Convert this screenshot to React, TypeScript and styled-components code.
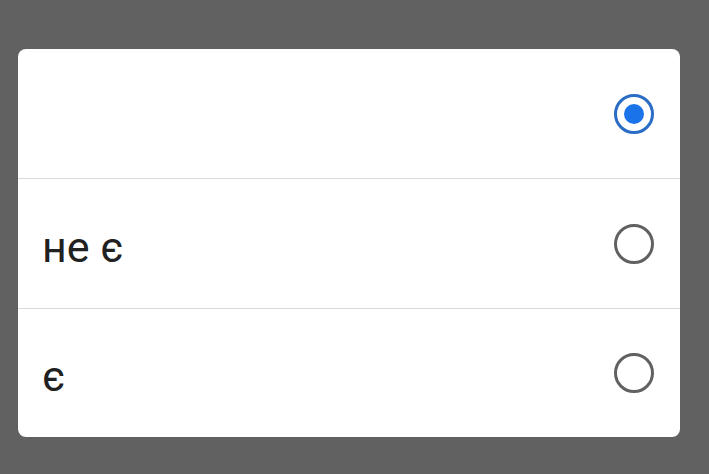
import React, { useState } from "react";
import styled, { createGlobalStyle } from "styled-components";

const GlobalStyle = createGlobalStyle`
    html, body {
        margin: 0;
        padding: 0;
        background: #616161;
        font-family: Roboto, "Noto Sans", sans-serif;
    }
`;

const Page = styled.div`
    padding: 49px 29px 0 18px;
`;

const Card = styled.div`
    background: #ffffff;
    border-radius: 8px;
    overflow: hidden;
`;

const Row = styled.label`
    display: flex;
    flex-direction: row;
    align-items: center;
    justify-content: space-between;
    height: 129px;
    padding: 0 26px 0 24px;
    cursor: pointer;
    & + & {
        border-top: 1px solid #dadada;
    }
    &:last-child {
        height: 128px;
    }
`;

const Label = styled.span`
    font-size: 43px;
    color: #212121;
    padding-top: 6px;
`;

const Radio = styled.span<{ checked: boolean }>`
    box-sizing: border-box;
    width: 40px;
    height: 40px;
    border-radius: 50%;
    border: 3px solid ${p => (p.checked ? "#2b6cc4" : "#616161")};
    display: flex;
    align-items: center;
    justify-content: center;
    &::after {
        content: "";
        width: 20px;
        height: 20px;
        border-radius: 50%;
        background: #1a73e8;
        display: ${p => (p.checked ? "block" : "none")};
    }
`;

const options = ["", "не є", "є"];

export default function App() {
    const [selected, setSelected] = useState(0);

    return (
        <Page>
            <GlobalStyle />
            <Card>
                {options.map((text, i) => (
                    <Row key={i} onClick={() => setSelected(i)}>
                        <Label>{text}</Label>
                        <Radio checked={selected === i} />
                    </Row>
                ))}
            </Card>
        </Page>
    );
}
